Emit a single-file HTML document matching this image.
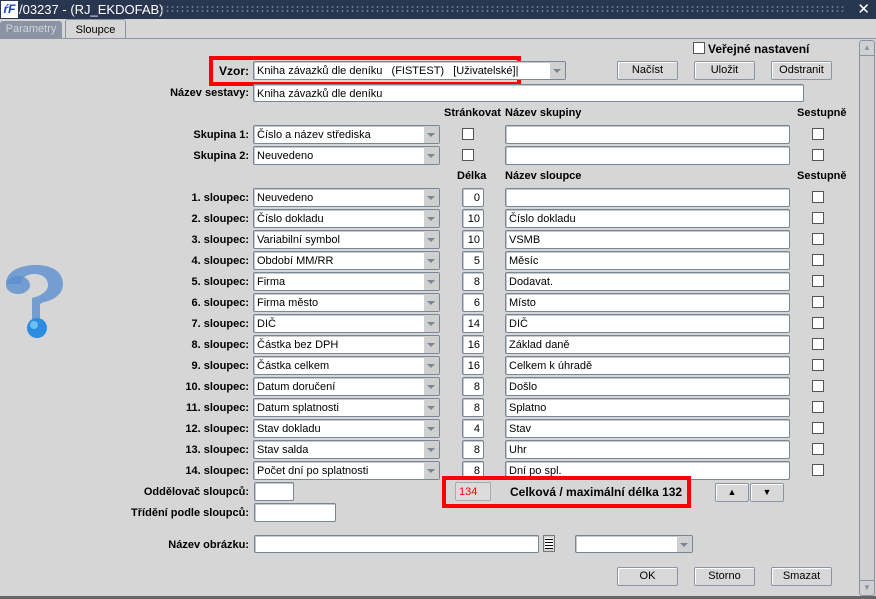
<!DOCTYPE html>
<html><head><meta charset="utf-8"><style>
*{box-sizing:border-box;margin:0;padding:0}
body{width:876px;height:599px;background:#d6d6d6;font-family:"Liberation Sans",sans-serif;font-size:11px;color:#000;position:relative;overflow:hidden}
.a{position:absolute}
.title{left:0;top:0;width:876px;height:19px;background:#283650;color:#fff;font-size:13px;line-height:19px}
.lbl{position:absolute;font-weight:bold;font-size:11px;text-align:right;white-space:nowrap;margin-top:1px}
.sel,.inp{position:absolute;background:#fff;border:1px solid #7a8595;border-radius:2px;box-shadow:inset 1px 1px 0 #c8c8c8;height:19px;line-height:17px;padding-left:3px;padding-top:1px;white-space:nowrap;overflow:hidden;font-size:11px}
.sel::after{content:"";position:absolute;right:0;top:0;width:15px;height:17px;background:#d0d0d0 }
.sel::before{content:"";position:absolute;right:4px;top:7px;border-left:4px solid transparent;border-right:4px solid transparent;border-top:4px solid #7a8595;z-index:1}
.num{text-align:right;padding-right:3px}
.cb{position:absolute;width:12px;height:12px;background:#fff;border:1px solid #555}
.btn{position:absolute;height:19px;border:1px solid #8a94a4;border-radius:2px;background:#d8d8d8;text-align:center;line-height:17px;font-size:11px;box-shadow:inset 1px 1px 0 #fff}
.hd{position:absolute;font-weight:bold;font-size:11px}
.red{position:absolute;border:4px solid #f00}
</style></head><body>
<div class="a title"><span style="position:absolute;left:1px;top:1px;width:17px;height:17px;background:#fff;color:#1a3ad0;font-weight:bold;font-style:italic;font-size:12px;line-height:17px;text-align:center">ŕF</span><span style="position:absolute;left:19px">/03237 - (RJ_EKDOFAB)</span>
<div style="position:absolute;left:160px;top:5px;width:685px;height:9px;background-image:radial-gradient(#6a7890 1px,transparent 1.2px);background-size:5px 4px"></div>
<span style="position:absolute;right:6px;top:0;font-size:15px">✕</span></div>
<div class="a" style="left:0;top:21px;width:62px;height:17px;background:#8a94a4;color:#cfd4dc;font-size:11px;line-height:17px;text-align:center;border-radius:3px 3px 0 0">Parametry</div>
<div class="a" style="left:65px;top:19px;width:61px;height:20px;background:#d6d6d6;border:1px solid #8a94a4;border-bottom:none;border-radius:3px 3px 0 0;font-size:11px;line-height:20px;text-align:center">Sloupce</div>
<div class="a" style="left:0;top:38px;width:876px;height:1px;background:#8a94a4"></div>

<div class="cb" style="left:693px;top:42px"></div><div class="hd" style="left:708px;top:42px;font-size:12px">Veřejné nastavení</div>
<div class="red" style="left:209px;top:56px;width:312px;height:30px"></div>
<div class="lbl" style="right:627px;top:63px;font-size:12px">Vzor:</div>
<div class="sel" style="left:253px;top:61px;width:313px">Kniha závazků dle deníku&nbsp;&nbsp;&nbsp;(FISTEST)&nbsp;&nbsp;&nbsp;[Uživatelské]|</div>
<div class="btn" style="left:617px;top:61px;width:61px">Načíst</div>
<div class="btn" style="left:694px;top:61px;width:61px">Uložit</div>
<div class="btn" style="left:771px;top:61px;width:61px">Odstranit</div>
<div class="lbl" style="right:627px;top:86px">Název sestavy:</div>
<div class="inp" style="left:253px;top:84px;width:551px;height:18px;line-height:16px">Kniha závazků dle deníku</div>

<div class="hd" style="left:444px;top:107px">Stránkovat</div><div class="hd" style="left:505px;top:107px">Název skupiny</div><div class="hd" style="left:797px;top:107px">Sestupně</div>
<div class="lbl" style="right:627px;top:128px">Skupina 1:</div><div class="sel" style="left:253px;top:125px;width:187px">Číslo a název střediska</div><div class="cb" style="left:462px;top:128px"></div><div class="inp" style="left:505px;top:125px;width:285px"></div><div class="cb" style="left:812px;top:128px"></div>
<div class="lbl" style="right:627px;top:149px">Skupina 2:</div><div class="sel" style="left:253px;top:146px;width:187px">Neuvedeno</div><div class="cb" style="left:462px;top:149px"></div><div class="inp" style="left:505px;top:146px;width:285px"></div><div class="cb" style="left:812px;top:149px"></div>

<div class="hd" style="left:457px;top:170px">Délka</div><div class="hd" style="left:505px;top:170px">Název sloupce</div><div class="hd" style="left:797px;top:170px">Sestupně</div>

<div class="lbl" style="right:627px;top:191px">1. sloupec:</div><div class="sel" style="left:253px;top:188px;width:187px">Neuvedeno</div><div class="inp num" style="left:462px;top:188px;width:22px">0</div><div class="inp" style="left:505px;top:188px;width:285px"></div><div class="cb" style="left:812px;top:191px"></div>
<div class="lbl" style="right:627px;top:212px">2. sloupec:</div><div class="sel" style="left:253px;top:209px;width:187px">Číslo dokladu</div><div class="inp num" style="left:462px;top:209px;width:22px">10</div><div class="inp" style="left:505px;top:209px;width:285px">Číslo dokladu</div><div class="cb" style="left:812px;top:212px"></div>
<div class="lbl" style="right:627px;top:233px">3. sloupec:</div><div class="sel" style="left:253px;top:230px;width:187px">Variabilní symbol</div><div class="inp num" style="left:462px;top:230px;width:22px">10</div><div class="inp" style="left:505px;top:230px;width:285px">VSMB</div><div class="cb" style="left:812px;top:233px"></div>
<div class="lbl" style="right:627px;top:254px">4. sloupec:</div><div class="sel" style="left:253px;top:251px;width:187px">Období MM/RR</div><div class="inp num" style="left:462px;top:251px;width:22px">5</div><div class="inp" style="left:505px;top:251px;width:285px">Měsíc</div><div class="cb" style="left:812px;top:254px"></div>
<div class="lbl" style="right:627px;top:275px">5. sloupec:</div><div class="sel" style="left:253px;top:272px;width:187px">Firma</div><div class="inp num" style="left:462px;top:272px;width:22px">8</div><div class="inp" style="left:505px;top:272px;width:285px">Dodavat.</div><div class="cb" style="left:812px;top:275px"></div>
<div class="lbl" style="right:627px;top:296px">6. sloupec:</div><div class="sel" style="left:253px;top:293px;width:187px">Firma město</div><div class="inp num" style="left:462px;top:293px;width:22px">6</div><div class="inp" style="left:505px;top:293px;width:285px">Místo</div><div class="cb" style="left:812px;top:296px"></div>
<div class="lbl" style="right:627px;top:317px">7. sloupec:</div><div class="sel" style="left:253px;top:314px;width:187px">DIČ</div><div class="inp num" style="left:462px;top:314px;width:22px">14</div><div class="inp" style="left:505px;top:314px;width:285px">DIČ</div><div class="cb" style="left:812px;top:317px"></div>
<div class="lbl" style="right:627px;top:338px">8. sloupec:</div><div class="sel" style="left:253px;top:335px;width:187px">Částka bez DPH</div><div class="inp num" style="left:462px;top:335px;width:22px">16</div><div class="inp" style="left:505px;top:335px;width:285px">Základ daně</div><div class="cb" style="left:812px;top:338px"></div>
<div class="lbl" style="right:627px;top:359px">9. sloupec:</div><div class="sel" style="left:253px;top:356px;width:187px">Částka celkem</div><div class="inp num" style="left:462px;top:356px;width:22px">16</div><div class="inp" style="left:505px;top:356px;width:285px">Celkem k úhradě</div><div class="cb" style="left:812px;top:359px"></div>
<div class="lbl" style="right:627px;top:380px">10. sloupec:</div><div class="sel" style="left:253px;top:377px;width:187px">Datum doručení</div><div class="inp num" style="left:462px;top:377px;width:22px">8</div><div class="inp" style="left:505px;top:377px;width:285px">Došlo</div><div class="cb" style="left:812px;top:380px"></div>
<div class="lbl" style="right:627px;top:401px">11. sloupec:</div><div class="sel" style="left:253px;top:398px;width:187px">Datum splatnosti</div><div class="inp num" style="left:462px;top:398px;width:22px">8</div><div class="inp" style="left:505px;top:398px;width:285px">Splatno</div><div class="cb" style="left:812px;top:401px"></div>
<div class="lbl" style="right:627px;top:422px">12. sloupec:</div><div class="sel" style="left:253px;top:419px;width:187px">Stav dokladu</div><div class="inp num" style="left:462px;top:419px;width:22px">4</div><div class="inp" style="left:505px;top:419px;width:285px">Stav</div><div class="cb" style="left:812px;top:422px"></div>
<div class="lbl" style="right:627px;top:443px">13. sloupec:</div><div class="sel" style="left:253px;top:440px;width:187px">Stav salda</div><div class="inp num" style="left:462px;top:440px;width:22px">8</div><div class="inp" style="left:505px;top:440px;width:285px">Uhr</div><div class="cb" style="left:812px;top:443px"></div>
<div class="lbl" style="right:627px;top:464px">14. sloupec:</div><div class="sel" style="left:253px;top:461px;width:187px">Počet dní po splatnosti</div><div class="inp num" style="left:462px;top:461px;width:22px">8</div><div class="inp" style="left:505px;top:461px;width:285px">Dní po spl.</div><div class="cb" style="left:812px;top:464px"></div>

<div class="lbl" style="right:627px;top:485px">Oddělovač sloupců:</div><div class="inp" style="left:254px;top:482px;width:40px"></div>
<div class="lbl" style="right:627px;top:506px">Třídění podle sloupců:</div><div class="inp" style="left:254px;top:503px;width:82px"></div>
<div class="red" style="left:442px;top:476px;width:249px;height:32px"></div>
<div class="inp" style="left:455px;top:482px;width:36px;background:#dcdcdc;color:#f00;box-shadow:none;border-color:#aaa">134</div>
<div class="hd" style="left:510px;top:485px;font-size:12px">Celková / maximální délka 132</div>
<div class="btn" style="left:715px;top:483px;width:34px;font-size:9px">▲</div>
<div class="btn" style="left:750px;top:483px;width:34px;font-size:9px">▼</div>

<div class="lbl" style="right:627px;top:538px">Název obrázku:</div><div class="inp" style="left:254px;top:535px;width:285px;height:18px"></div>
<div class="a" style="left:543px;top:535px;width:12px;height:17px;background:#fff;border:1px solid #777;background-image:repeating-linear-gradient(#000 0 1px,#fff 1px 3px);background-clip:content-box;padding:2px 1px"></div>
<div class="sel" style="left:575px;top:535px;width:118px;height:18px"></div>
<div class="btn" style="left:617px;top:567px;width:61px">OK</div>
<div class="btn" style="left:694px;top:567px;width:61px">Storno</div>
<div class="btn" style="left:771px;top:567px;width:61px">Smazat</div>

<svg class="a" style="left:0;top:262px" width="70" height="80"><path d="M6 22 C6 8 22 3 36 3 C52 3 63 10 63 22 C63 32 54 38 44 40 L40 42 L40 58 L32 58 L32 36 C40 34 48 30 48 23 C48 16 42 12 34 12 C26 12 22 16 21 22 Z" fill="#5b8ed0" opacity=".8"/><ellipse cx="18" cy="23" rx="12" ry="9" fill="#5b8ed0" opacity=".8"/><circle cx="37" cy="66" r="10" fill="#2c8ce0"/><circle cx="34" cy="63" r="4" fill="#6cc0f0"/></svg>

<div class="a" style="left:859px;top:40px;width:16px;height:556px;background:#d0d0d0;border:1px solid #8a94a4;border-radius:3px"></div>
<div class="a" style="left:860px;top:41px;width:14px;height:15px;border-bottom:1px solid #8a94a4;font-size:8px;color:#8a94a4;text-align:center;line-height:14px">▲</div>
<div class="a" style="left:860px;top:580px;width:14px;height:15px;border-top:1px solid #8a94a4;font-size:8px;color:#8a94a4;text-align:center;line-height:14px">▼</div>
<div class="a" style="left:0;top:596px;width:876px;height:3px;background:#666"></div>
</body></html>
